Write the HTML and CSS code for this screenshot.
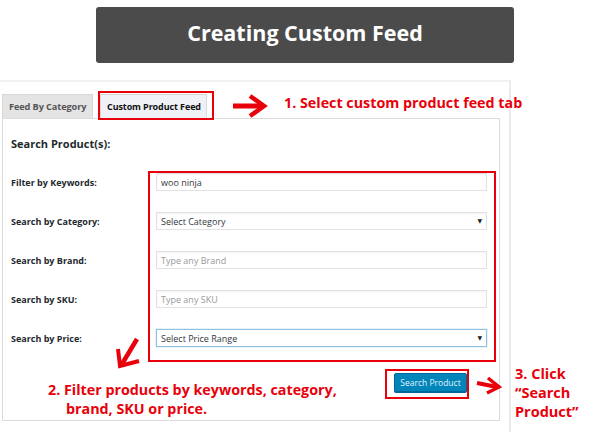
FILE: index.html
```html
<!DOCTYPE html>
<html>
<head>
<meta charset="utf-8">
<link rel="stylesheet" href="styles.css">
</head>
<body>
<div class="title">Creating Custom Feed</div>
<div class="wrap">
  <div class="tabs">
    <div class="tab">Feed By Category</div>
    <div class="tab active">Custom Product Feed</div>
  </div>
  <div class="panel">
    <h3 class="heading">Search Product(s):</h3>
    <div class="form">
      <label class="lbl">Filter by Keywords:</label>
      <div class="field">woo ninja</div>
      <label class="lbl">Search by Category:</label>
      <div class="field select">Select Category<span class="caret">▼</span></div>
      <label class="lbl">Search by Brand:</label>
      <div class="field ph">Type any Brand</div>
      <label class="lbl">Search by SKU:</label>
      <div class="field ph">Type any SKU</div>
      <label class="lbl">Search by Price:</label>
      <div class="field select focus">Select Price Range<span class="caret">▼</span></div>
    </div>
    <div class="actions"><button class="btn">Search Product</button></div>
  </div>
</div>

<div class="redbox box-tab"></div>
<div class="redbox box-form"></div>
<div class="redbox box-btn"></div>

<div class="note note1">1. Select custom product feed tab</div>
<div class="note note2">2. Filter products by keywords, category,<br><span class="indent">brand, SKU or price.</span></div>
<div class="note note3">3. Click<br>“Search<br>Product”</div>

<svg class="arrows" width="609" height="432" viewBox="0 0 609 432">
  <g fill="none" stroke="#e8000a" stroke-linecap="butt" stroke-linejoin="miter">
    <line x1="233" y1="106" x2="262" y2="106" stroke-width="5"/>
    <polyline points="250,96 264,106 250,116" stroke-width="4.5"/>
    <line x1="137" y1="339" x2="122" y2="364" stroke-width="4.5"/>
    <polyline points="118,349 120,366 139,361" stroke-width="4"/>
    <line x1="477" y1="383" x2="497" y2="387" stroke-width="4"/>
    <polyline points="488,378 499,387 487,393" stroke-width="3.5"/>
  </g>
</svg>
</body>
</html>
```
FILE: styles.css
```css
* { box-sizing: border-box; }
html, body { margin: 0; padding: 0; }
body {
  width: 609px;
  height: 432px;
  background: #fff;
  font-family: "Open Sans", "DejaVu Sans", sans-serif;
  position: relative;
  overflow: hidden;
}
.title {
  margin: 7px 0 0 96px;
  width: 418px;
  height: 56px;
  background: #4b4b4b;
  border-radius: 3px;
  color: #fff;
  font-weight: 700;
  font-size: 21.5px;
  display: flex;
  align-items: center;
  justify-content: center;
  padding-bottom: 5px;
}
.wrap {
  margin-top: 17px;
  width: 511px;
  height: 352px;
  border-top: 2px solid #f1f1f1;
  border-right: 2px solid #ebebeb;
  padding: 12px 0 0 2px;
}
.tabs {
  display: flex;
  gap: 7px;
  height: 24px;
}
.tab {
  background: #e4e4e4;
  border: 1px solid #d8d8d8;
  border-bottom: none;
  color: #555;
  font-size: 9.2px;
  letter-spacing: -0.1px;
  font-weight: 700;
  white-space: nowrap;
  padding: 0 0 0 6px;
  display: flex;
  align-items: center;
  width: 91px;
}
.tab.active {
  background: #f0f0f7;
  color: #111;
  width: 107px;
  padding-left: 6px;
  font-size: 9px;
}
.panel {
  width: 498px;
  height: 303px;
  border: 1px solid #dcdcdc;
  padding: 0 0 0 8px;
  background: #fff;
}
.heading {
  margin: 18px 0 0;
  font-size: 11px;
  line-height: 14px;
  color: #23282d;
  font-weight: 700;
}
.form {
  margin-top: 22px;
  display: grid;
  grid-template-columns: 145px 331px;
  row-gap: 21px;
  align-items: center;
}
.lbl {
  font-size: 9px;
  font-weight: 700;
  color: #23282d;
}
.field {
  height: 18px;
  border: 1px solid #e2e2e2;
  box-shadow: inset 0 1px 2px rgba(0,0,0,0.05);
  background: #fff;
  font-size: 9px;
  color: #32373c;
  padding: 0 4px;
  display: flex;
  align-items: center;
  position: relative;
}
.field.ph { color: #9a9a9a; }
.field.select { justify-content: space-between; }
.field.focus { border-color: #8fc1e3; box-shadow: 0 0 1px rgba(30,140,190,0.6); }
.caret { font-size: 6px; color: #222; }
.actions {
  margin-top: 26px;
  display: flex;
  padding-left: 383px;
}
.btn {
  width: 73px;
  height: 19px;
  background: #0085ba;
  border: 1px solid #006799;
  border-radius: 2px;
  color: #e6f3fa;
  font-family: "Open Sans", "DejaVu Sans", sans-serif;
  font-size: 8.5px;
  padding: 0;
  box-shadow: 0 1px 0 #006799;
}
.redbox {
  position: absolute;
  border: 2px solid #e8000a;
}
.box-tab { left: 98px; top: 91px; width: 116px; height: 29px; }
.box-form { left: 148px; top: 171px; width: 348px; height: 191px; }
.box-btn { left: 385px; top: 369px; width: 84px; height: 30px; }
.note {
  position: absolute;
  color: #e8000a;
  font-weight: 700;
  white-space: nowrap;
}
.note1 { left: 284px; top: 93px; font-size: 14.3px; line-height: 20px; }
.note2 { left: 48px; top: 380px; font-size: 14.3px; line-height: 19px; }
.note2 .indent { padding-left: 18px; }
.note3 { left: 515px; top: 364px; font-size: 14.5px; line-height: 19px; }
.arrows { position: absolute; left: 0; top: 0; pointer-events: none; }
```
